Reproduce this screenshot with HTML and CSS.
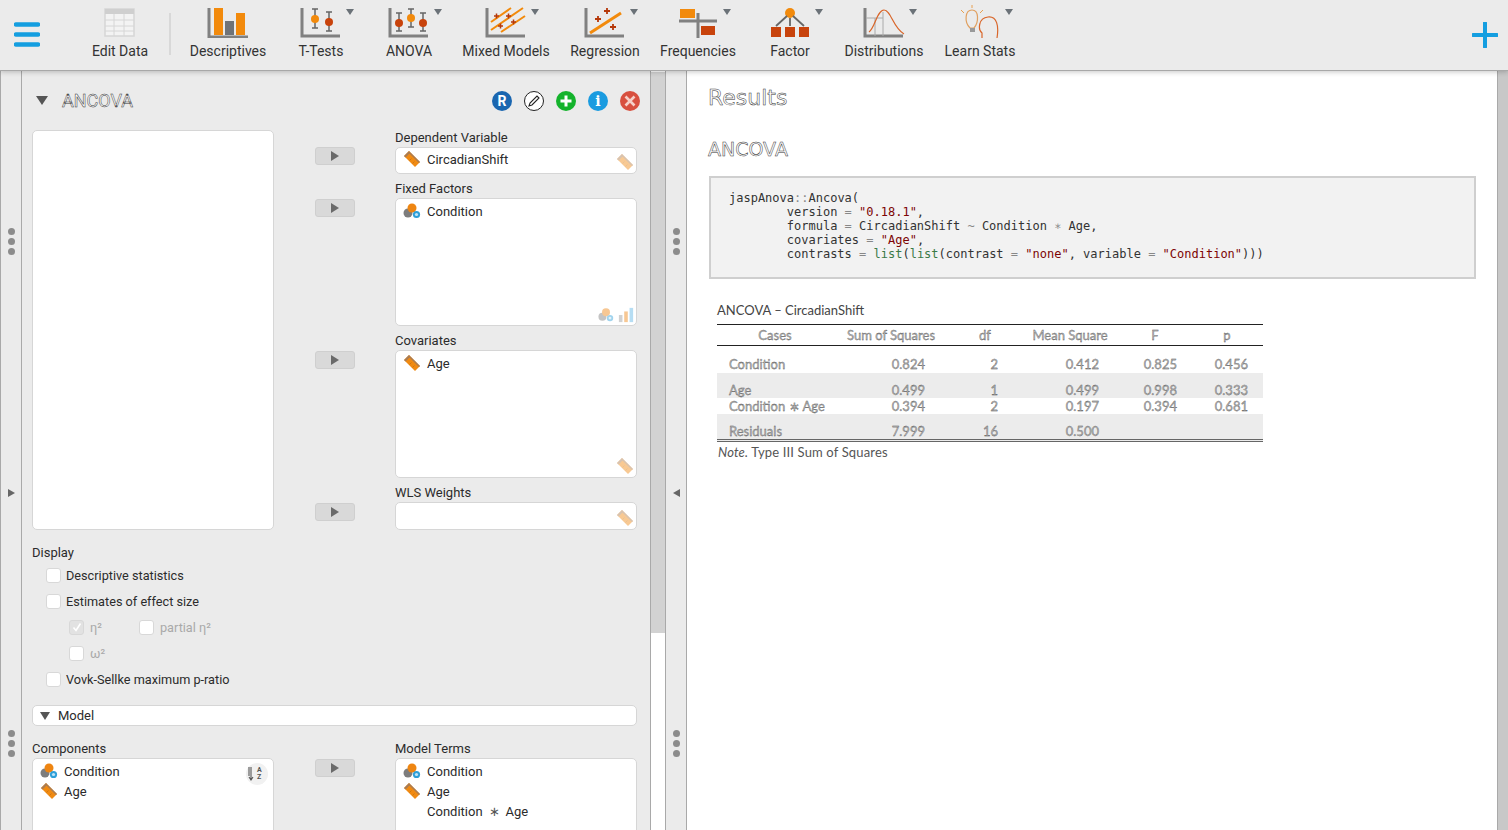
FILE: index.html
```html
<!DOCTYPE html>
<html lang="en">
<head>
    <meta charset="UTF-8">
    <title>JASP - ANCOVA</title>
    <link rel="stylesheet" href="styles.css">
</head>
<body>
    <svg class="defs" width="0" height="0">
        <defs>
            <symbol id="ruler" viewBox="0 0 18 18">
                <path d="M1 6 L6 1 L17 12 L12 17 Z" fill="#f08a12"/>
                <path d="M1 6 L6 1 L7.500 2.500 L2.500 7.500 Z M6 1 L17 12 L16 13 L5 2 Z" fill="#a87c55"/>
                <path d="M6.500 10.500 L8.500 8.500 M9.500 13.500 L11.500 11.500" stroke="#c9720f" stroke-width="0.800"/>
            </symbol>
            <symbol id="nominal" viewBox="0 0 18 18">
                <circle cx="5" cy="11" r="4.500" fill="#7d7d7d"/>
                <circle cx="9" cy="6" r="4.500" fill="#ee8511"/>
                <circle cx="13.500" cy="12.500" r="3.600" fill="#2e9fd8"/>
                <circle cx="13.500" cy="12.500" r="1.600" fill="#bfe4f7"/>
            </symbol>
        </defs>
    </svg>

    <header class="toolbar">
        <div class="menu-btn">
            <svg width="26" height="26" viewBox="0 0 26 26">
                <path d="M2 3.500 H24 M2 13.500 H24 M2 23.500 H24" stroke="#149ee0" stroke-width="4.500" stroke-linecap="round"/>
            </svg>
        </div>

        <div class="tool tool-edit">
            <svg class="tool-icon" viewBox="0 0 42 38">
                <rect x="6" y="9" width="29" height="27" fill="#f3f3f3" stroke="#d6d6d6" stroke-width="1.500"/>
                <rect x="6" y="9" width="29" height="5" fill="#cfcfcf"/>
                <path d="M6 20 H35 M6 26 H35 M6 31 H35 M15 14 V36 M25 14 V36" stroke="#d6d6d6"/>
            </svg>
            <span>Edit Data</span>
        </div>
        <div class="tool-sep"></div>

        <nav class="modules">
            <div class="tool">
                <svg class="tool-icon" viewBox="0 0 42 38">
                    <path d="M2 8 V37 H41" fill="none" stroke="#808080" stroke-width="3"/>
                    <rect x="7" y="8" width="9" height="27" fill="#f28a0c"/>
                    <rect x="18" y="21" width="9" height="14" fill="#6f7378"/>
                    <rect x="29" y="13" width="9" height="22" fill="#f28a0c"/>
                </svg>
                <span>Descriptives</span>
            </div>
            <div class="tool has-menu">
                <svg class="tool-icon" viewBox="0 0 42 38">
                    <path d="M2 8 V36 H40" fill="none" stroke="#808080" stroke-width="3"/>
                    <path d="M12 9 H18 M15 9 V28 M12 28 H18 M26 12 H32 M29 12 V31 M26 31 H32" stroke="#666" stroke-width="1.500" fill="none"/>
                    <circle cx="15" cy="19" r="4" fill="#f28a0c"/>
                    <circle cx="29" cy="22" r="4" fill="#c8430c"/>
                </svg>
                <span>T-Tests</span>
            </div>
            <div class="tool has-menu">
                <svg class="tool-icon" viewBox="0 0 42 38">
                    <path d="M2 8 V36 H40" fill="none" stroke="#808080" stroke-width="3"/>
                    <path d="M8 13 H14 M11 13 V31 M8 31 H14 M20 9 H26 M23 9 V27 M20 27 H26 M32 13 H38 M35 13 V31 M32 31 H38" stroke="#666" stroke-width="1.500" fill="none"/>
                    <circle cx="11" cy="23" r="4" fill="#c8430c"/>
                    <circle cx="23" cy="18" r="4" fill="#f28a0c"/>
                    <circle cx="35" cy="23" r="4" fill="#c8430c"/>
                </svg>
                <span>ANOVA</span>
            </div>
            <div class="tool has-menu">
                <svg class="tool-icon" viewBox="0 0 42 38">
                    <path d="M2 8 V36 H40" fill="none" stroke="#808080" stroke-width="3"/>
                    <path d="M6 22 L26 8 M6 30 L38 8 M16 32 L40 16" stroke="#f28a0c" stroke-width="2"/>
                    <path d="M9 16 h5 M11.500 13.500 v5 M21 16 h5 M23.500 13.500 v5 M13 26 h5 M15.500 23.500 v5 M26 22 h5 M28.500 19.500 v5" stroke="#b5380a" stroke-width="1.500"/>
                </svg>
                <span>Mixed Models</span>
            </div>
            <div class="tool has-menu">
                <svg class="tool-icon" viewBox="0 0 42 38">
                    <path d="M2 8 V36 H40" fill="none" stroke="#808080" stroke-width="3"/>
                    <path d="M6 33 L37 13" stroke="#f28a0c" stroke-width="3"/>
                    <path d="M11 19 h6 M14 16 v6 M20 11 h6 M23 8 v6 M26 27 h6 M29 24 v6" stroke="#b5380a" stroke-width="1.800"/>
                </svg>
                <span>Regression</span>
            </div>
            <div class="tool has-menu">
                <svg class="tool-icon" viewBox="0 0 42 38">
                    <path d="M2 21 H40 M21 13 V38" stroke="#808080" stroke-width="3"/>
                    <rect x="3" y="9" width="15" height="9" fill="#f28a0c"/>
                    <rect x="24" y="26" width="14" height="9" fill="#c8430c"/>
                </svg>
                <span>Frequencies</span>
            </div>
            <div class="tool has-menu">
                <svg class="tool-icon" viewBox="0 0 42 38">
                    <circle cx="21" cy="13" r="5" fill="#f28a0c"/>
                    <path d="M18 16 L7 26 M21 18 V26 M24 16 L35 26" stroke="#666" stroke-width="1.800"/>
                    <rect x="2" y="27" width="10" height="10" fill="#c8430c"/>
                    <rect x="16" y="27" width="10" height="10" fill="#c8430c"/>
                    <rect x="30" y="27" width="10" height="10" fill="#c8430c"/>
                </svg>
                <span>Factor</span>
            </div>
            <div class="tool has-menu">
                <svg class="tool-icon" viewBox="0 0 42 38">
                    <path d="M2 8 V36 H40" fill="none" stroke="#808080" stroke-width="3"/>
                    <path d="M3 18 H20 M12 18 V36 M20 12 V36" stroke="#aaa"/>
                    <path d="M6 32 C12 28 14 10 21 10 C28 10 30 28 41 34" fill="none" stroke="#d9662a" stroke-width="1.200"/>
                </svg>
                <span>Distributions</span>
            </div>
            <div class="tool has-menu">
                <svg class="tool-icon" viewBox="0 0 42 38">
                    <path d="M11 28 C5 22 6 10 13 10 C20 10 20 22 15 28 Z" fill="none" stroke="#e0a060" stroke-width="1.200"/>
                    <rect x="11" y="28" width="5" height="4" fill="#999"/>
                    <path d="M2 10 L5 13 M13 5 V8 M24 10 L21 13" stroke="#e8a050"/>
                    <path d="M23 38 V33 C19 30 19 18 29 17 C38 16 40 26 38 38" fill="none" stroke="#d9662a" stroke-width="1.200"/>
                </svg>
                <span>Learn Stats</span>
            </div>
        </nav>

        <div class="add-module">
            <svg width="26" height="26" viewBox="0 0 26 26">
                <path d="M1 13 H25 M13 1 V25" stroke="#149ee0" stroke-width="4" stroke-linecap="round"/>
            </svg>
        </div>
    </header>

    <main class="workspace">
        <div class="splitter">
            <div class="dots"><i></i><i></i><i></i></div>
            <div class="arrow-right"></div>
            <div class="dots"><i></i><i></i><i></i></div>
        </div>

        <section class="analysis">
            <div class="analysis-head">
                <span class="tri"></span>
                <h2>ANCOVA</h2>
                <div class="head-btns">
                    <span class="round round-r">R</span>
                    <span class="round round-edit">
                        <svg width="14" height="14" viewBox="0 0 14 14">
                            <path d="M2 12 L3 9 L10 2 L12 4 L5 11 Z" fill="none" stroke="#222" stroke-width="1.100"/>
                        </svg>
                    </span>
                    <span class="round round-add">
                        <svg width="14" height="14" viewBox="0 0 14 14"><path d="M1.500 7 H12.500 M7 1.500 V12.500" stroke="#fff" stroke-width="3"/></svg>
                    </span>
                    <span class="round round-info">i</span>
                    <span class="round round-close">
                        <svg width="14" height="14" viewBox="0 0 14 14"><path d="M2.500 2.500 L11.500 11.500 M11.500 2.500 L2.500 11.500" stroke="#f6d0c8" stroke-width="2.600"/></svg>
                    </span>
                </div>
            </div>

            <div class="assign">
                <div class="var-list source"></div>

                <button class="move-btn"><span></span></button>
                <div class="field">
                    <label>Dependent Variable</label>
                    <div class="var-list box-single">
                        <div class="var"><svg class="vi"><use href="#ruler"/></svg>CircadianShift</div>
                        <svg class="hint hint-ruler"><use href="#ruler"/></svg>
                    </div>
                </div>

                <button class="move-btn"><span></span></button>
                <div class="field">
                    <label>Fixed Factors</label>
                    <div class="var-list box-tall">
                        <div class="var"><svg class="vi"><use href="#nominal"/></svg>Condition</div>
                        <div class="hints">
                            <svg class="hint-small"><use href="#nominal"/></svg>
                            <svg class="hint-small" viewBox="0 0 18 18">
                                <rect x="1" y="9" width="4" height="8" fill="#9a9a9a"/>
                                <rect x="7" y="5" width="4" height="12" fill="#ee8511"/>
                                <rect x="13" y="1" width="4" height="16" fill="#5fb6e6"/>
                            </svg>
                        </div>
                    </div>
                </div>

                <button class="move-btn"><span></span></button>
                <div class="field">
                    <label>Covariates</label>
                    <div class="var-list box-tall">
                        <div class="var"><svg class="vi"><use href="#ruler"/></svg>Age</div>
                        <svg class="hint hint-ruler"><use href="#ruler"/></svg>
                    </div>
                </div>

                <button class="move-btn"><span></span></button>
                <div class="field">
                    <label>WLS Weights</label>
                    <div class="var-list box-wls">
                        <svg class="hint hint-ruler"><use href="#ruler"/></svg>
                    </div>
                </div>
            </div>

            <div class="display">
                <div class="group-label">Display</div>
                <div class="check"><span class="box"></span>Descriptive statistics</div>
                <div class="check"><span class="box"></span>Estimates of effect size</div>
                <div class="check sub off">
                    <span class="box checked"><svg width="12" height="12" viewBox="0 0 12 12"><path d="M2.500 6.500 L5 9.500 L9.500 2.500" fill="none" stroke="#fff" stroke-width="1.600"/></svg></span>
                    <span class="eta">η²</span>
                    <span class="box"></span>partial η²
                </div>
                <div class="check sub off"><span class="box"></span>ω²</div>
                <div class="check"><span class="box"></span>Vovk-Sellke maximum p-ratio</div>
            </div>

            <div class="expander"><span class="tri tri-small"></span>Model</div>

            <div class="model">
                <div class="field">
                    <label>Components</label>
                    <div class="var-list box-model">
                        <div class="var var-tight"><svg class="vi"><use href="#nominal"/></svg>Condition</div>
                        <div class="var var-tight"><svg class="vi"><use href="#ruler"/></svg>Age</div>
                        <span class="sort-btn">
                            <svg width="18" height="16" viewBox="0 0 18 16">
                                <path d="M5 1 V14 M3 11 L5 14 L7 11 M3 1 V10" stroke="#555" fill="none" stroke-width="1.100"/>
                            </svg>
                            <span class="az">A<br>Z</span>
                        </span>
                    </div>
                </div>
                <button class="move-btn"><span></span></button>
                <div class="field">
                    <label>Model Terms</label>
                    <div class="var-list box-model">
                        <div class="var var-tight"><svg class="vi"><use href="#nominal"/></svg>Condition</div>
                        <div class="var var-tight"><svg class="vi"><use href="#ruler"/></svg>Age</div>
                        <div class="var var-tight var-plain">Condition <em>∗</em> Age</div>
                    </div>
                </div>
            </div>
        </section>

        <div class="scroll-left"><div class="scroll-thumb"></div></div>

        <div class="splitter">
            <div class="dots"><i></i><i></i><i></i></div>
            <div class="arrow-left"></div>
            <div class="dots"><i></i><i></i><i></i></div>
        </div>

        <section class="results">
            <h1>Results</h1>
            <h2>ANCOVA</h2>
            <pre class="code">jaspAnova<b>::</b>Ancova(
        version <b>=</b> <s>"0.18.1"</s>,
        formula <b>=</b> CircadianShift <b>~</b> Condition <b>∗</b> Age,
        covariates <b>=</b> <s>"Age"</s>,
        contrasts <b>=</b> <u>list</u>(<u>list</u>(contrast <b>=</b> <s>"none"</s>, variable <b>=</b> <s>"Condition"</s>)))</pre>

            <div class="table-title">ANCOVA – CircadianShift</div>
            <table class="anova">
                <thead>
                    <tr><th>Cases</th><th>Sum of Squares</th><th>df</th><th>Mean Square</th><th>F</th><th>p</th></tr>
                </thead>
                <tbody>
                    <tr class="r-tall"><td>Condition</td><td>0.824</td><td>2</td><td>0.412</td><td>0.825</td><td>0.456</td></tr>
                    <tr class="r-mid shade"><td>Age</td><td>0.499</td><td>1</td><td>0.499</td><td>0.998</td><td>0.333</td></tr>
                    <tr class="r-low"><td>Condition ∗ Age</td><td>0.394</td><td>2</td><td>0.197</td><td>0.394</td><td>0.681</td></tr>
                    <tr class="r-tall shade"><td>Residuals</td><td>7.999</td><td>16</td><td>0.500</td><td></td><td></td></tr>
                </tbody>
            </table>
            <p class="note"><i>Note.</i> Type III Sum of Squares</p>
        </section>

        <div class="scroll-right"></div>
    </main>
</body>
</html>
```

FILE: styles.css
```css
* {
    box-sizing: border-box;
}

html, body {
    height: 100%;
}

body {
    margin: 0;
    overflow: hidden;
    font-family: Roboto, Arial, sans-serif;
    font-size: 13px;
    color: #2b2b2b;
    background-color: #ebebeb;
    display: flex;
    flex-direction: column;
}

.defs {
    position: absolute;
}

/* toolbar */

.toolbar {
    position: relative;
    z-index: 2;
    height: 71px;
    flex: none;
    display: flex;
    background-color: #ebebeb;
    border-bottom: 1px solid #a8a8a8;
    box-shadow: 0 1px 5px rgba(0, 0, 0, 0.22);
}

.menu-btn {
    width: 71px;
    padding: 21px 0 0 14px;
}

.tool {
    position: relative;
    display: flex;
    flex-direction: column;
    align-items: center;
    font-size: 14px;
    color: #333;
}

.tool span {
    margin-top: 5px;
    line-height: 16px;
    white-space: nowrap;
}

.tool-icon {
    width: 42px;
    height: 38px;
}

.tool-edit {
    width: 98px;
}

.tool-sep {
    width: 2px;
    height: 42px;
    margin: 13px 8px 0 0;
    background-color: #d8d8d8;
}

.modules {
    display: grid;
    grid-template-columns: 98px 88px 88px 106px 92px 94px 90px 98px 94px;
}

.has-menu::after {
    content: "";
    position: absolute;
    left: calc(50% + 25px);
    top: 9px;
    border-left: 4px solid transparent;
    border-right: 4px solid transparent;
    border-top: 6px solid #6b7278;
}

.add-module {
    margin-left: auto;
    padding: 22px 10px 0 0;
}

/* panels */

.workspace {
    flex: 1;
    min-height: 0;
    display: flex;
}

.splitter {
    width: 22px;
    flex: none;
    display: flex;
    flex-direction: column;
    align-items: center;
    justify-content: space-between;
    padding: 157px 0 73px;
    border-right: 1px solid #a9a9a9;
    border-left: 1px solid #a9a9a9;
    background-color: #ebebeb;
}

.dots {
    display: flex;
    flex-direction: column;
    gap: 3px;
}

.dots i {
    width: 7px;
    height: 7px;
    border-radius: 50%;
    background-color: #8c8c8c;
}

.arrow-right {
    border-top: 4px solid transparent;
    border-bottom: 4px solid transparent;
    border-left: 7px solid #666;
}

.arrow-left {
    border-top: 4px solid transparent;
    border-bottom: 4px solid transparent;
    border-right: 7px solid #666;
}

.analysis {
    width: 628px;
    flex: none;
    overflow: hidden;
    padding: 0 13px 0 10px;
    background-color: #ebebeb;
}

.scroll-left {
    width: 15px;
    flex: none;
    padding-top: 1px;
    background-color: #fff;
    border-left: 1px solid #a9a9a9;
}

.scroll-thumb {
    height: 561px;
    background-color: #d2d2d2;
}

.analysis-head {
    height: 59px;
    display: flex;
    align-items: center;
}

.analysis-head h2 {
    margin: 0 0 0 14px;
    font-size: 18px;
    font-weight: 400;
    color: #fff;
    -webkit-text-stroke: 0.5px #333;
}

.tri {
    margin-left: 4px;
    border-left: 6px solid transparent;
    border-right: 6px solid transparent;
    border-top: 9px solid #555;
}

.tri-small {
    margin: 0 8px 0 7px;
    border-left-width: 5px;
    border-right-width: 5px;
    border-top-width: 8px;
}

.head-btns {
    margin-left: auto;
    margin-right: -3px;
    display: flex;
    gap: 12px;
}

.round {
    width: 20px;
    height: 20px;
    border-radius: 50%;
    display: flex;
    align-items: center;
    justify-content: center;
    color: #fff;
    font-weight: 700;
    font-size: 14px;
}

.round-r { background-color: #1a66b0; }
.round-edit { background-color: #fff; border: 1px solid #222; }
.round-add { background-color: #14b32c; }
.round-info { background-color: #1a9be0; font-family: "DejaVu Serif", serif; }
.round-close { background-color: #d8503f; }

/* variable assignment */

.assign {
    display: grid;
    grid-template-columns: 242px 121px 242px;
    row-gap: 7px;
}

.source {
    grid-row: 1 / span 4;
    grid-column: 1;
}

.var-list {
    position: relative;
    background-color: #fff;
    border: 1px solid #d6d6d6;
    border-radius: 5px;
}

.field label {
    display: block;
    height: 17px;
    line-height: 16px;
    white-space: nowrap;
}

.box-single { height: 27px; }
.box-tall { height: 128px; }
.box-wls { height: 28px; }
.box-model { height: 90px; }

.move-btn {
    justify-self: center;
    width: 40px;
    height: 18px;
    margin-top: 18px;
    padding: 0;
    display: flex;
    align-items: center;
    justify-content: center;
    background-color: #d9d9d9;
    border: 1px solid #cfcfcf;
    border-radius: 3px;
}

.assign .source + .move-btn {
    margin-top: 17px;
}

.move-btn span {
    border-top: 5px solid transparent;
    border-bottom: 5px solid transparent;
    border-left: 8px solid #6a6a6a;
}

.var {
    display: flex;
    align-items: center;
    height: 22px;
    padding-left: 7px;
    margin-top: 1px;
    white-space: nowrap;
}

.box-single .var {
    margin-top: 0;
}

.vi {
    width: 18px;
    height: 18px;
    margin-right: 6px;
}

.hint {
    position: absolute;
    right: 2px;
    bottom: 2px;
    width: 18px;
    height: 18px;
    opacity: 0.45;
}

.hints {
    position: absolute;
    right: 2px;
    bottom: 2px;
    display: flex;
    gap: 4px;
    opacity: 0.45;
}

.hint-small {
    width: 16px;
    height: 16px;
}

/* display options */

.display {
    margin-top: 15px;
}

.group-label {
    height: 16px;
    line-height: 16px;
}

.check {
    height: 26px;
    display: flex;
    align-items: center;
    padding-left: 14px;
    font-size: 12.7px;
}

.group-label + .check {
    margin-top: 1px;
}

.box {
    width: 15px;
    height: 15px;
    margin-right: 5px;
    flex: none;
    display: flex;
    align-items: center;
    justify-content: center;
    background-color: #fff;
    border: 1px solid #d8d8d8;
    border-radius: 3px;
}

.sub {
    padding-left: 37px;
}

.sub .box {
    margin-right: 6px;
}

.off {
    color: #a9a9a9;
}

.checked {
    background-color: #e2e2e2;
}

.eta {
    width: 49px;
}

.expander {
    display: flex;
    align-items: center;
    height: 21px;
    margin-top: 13px;
    background-color: #fff;
    border: 1px solid #d6d6d6;
    border-radius: 5px;
    width: 605px;
}

.model {
    margin-top: 15px;
    display: grid;
    grid-template-columns: 242px 121px 242px;
}

.var-tight {
    height: 20px;
    margin-top: 0;
}

.box-model .var-tight:first-child {
    margin-top: 2px;
}

.var-plain {
    padding-left: 31px;
}

.var-plain em {
    margin: 0 6px;
    font-style: normal;
    color: #555;
}

.sort-btn {
    position: absolute;
    top: 4px;
    right: 5px;
    width: 22px;
    height: 22px;
    display: flex;
    align-items: center;
    border-radius: 50%;
    background-color: #f1f1f1;
}

.az {
    margin-left: -7px;
    font-size: 7px;
    line-height: 7px;
    font-weight: 700;
    color: #555;
}

/* results */

.results {
    flex: 1;
    min-width: 0;
    overflow: hidden;
    padding: 0 21px;
    background-color: #fff;
    font-family: Lato, Arial, sans-serif;
    color: #555;
}

.results h1,
.results h2 {
    margin: 0;
    font-family: "DejaVu Sans", sans-serif;
    font-weight: 400;
    color: #fff;
    -webkit-text-stroke: 0.5px #333;
}

.results h1 {
    height: 51px;
    padding-top: 13px;
    font-size: 22px;
    line-height: 28px;
}

.results h2 {
    height: 54px;
    padding-top: 14px;
    font-size: 19px;
    line-height: 26px;
}

.code {
    width: 767px;
    height: 103px;
    margin: 0 0 0 1px;
    padding: 13px 18px;
    font-family: "DejaVu Sans Mono", monospace;
    font-size: 12px;
    line-height: 14px;
    color: #333;
    background-color: #f2f2f2;
    border: 2px solid #cfcfcf;
}

.code b {
    font-weight: 400;
    color: #888;
}

.code s {
    text-decoration: none;
    color: #7d0505;
}

.code u {
    text-decoration: none;
    color: #3b7a47;
}

.table-title {
    margin: 22px 0 0 9px;
    height: 23px;
    line-height: 18px;
    font-size: 13px;
    color: #444;
}

.anova {
    width: 546px;
    margin-left: 9px;
    border-collapse: collapse;
    table-layout: fixed;
    font-size: 13px;
    border-bottom: 3px double #666;
    color: #bbb;
    -webkit-text-stroke: 0.3px #444;
}

.anova thead tr {
    border-top: 1px solid #222;
    border-bottom: 1px solid #222;
}

.anova th {
    height: 21px;
    padding: 0;
    font-weight: 400;
    text-align: center;
}

.anova th:nth-child(1) { width: 116px; }
.anova th:nth-child(2) { width: 116px; }
.anova th:nth-child(3) { width: 72px; }
.anova th:nth-child(4) { width: 98px; }
.anova th:nth-child(5) { width: 72px; }
.anova th:nth-child(6) { width: 72px; }

.anova td {
    padding: 0;
    vertical-align: bottom;
    text-align: right;
    line-height: 15px;
}

.anova tbody tr:first-child td {
    padding-bottom: 1px;
}

.anova td:nth-child(1) { padding-left: 12px; text-align: left; }
.anova td:nth-child(2) { padding-right: 24px; }
.anova td:nth-child(3) { padding-right: 23px; }
.anova td:nth-child(4) { padding-right: 20px; }
.anova td:nth-child(5) { padding-right: 14px; }
.anova td:nth-child(6) { padding-right: 15px; }

.r-tall { height: 27px; }
.r-mid { height: 25px; }
.r-low { height: 16px; }

.shade {
    background-color: #ececec;
}

.note {
    margin: 3px 0 0 10px;
    line-height: 15px;
    font-size: 13px;
    letter-spacing: 0.15px;
}

.scroll-right {
    width: 11px;
    flex: none;
    background-color: #c8c8c8;
    border-left: 1px solid #a9a9a9;
}
```
